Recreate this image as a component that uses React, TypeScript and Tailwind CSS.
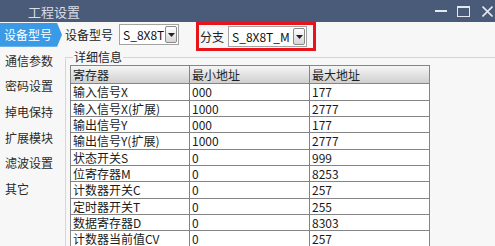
const font = { fontFamily: '"Noto Sans CJK SC", "Liberation Sans", sans-serif' };

const navItems = ["设备型号", "通信参数", "密码设置", "掉电保持", "扩展模块", "滤波设置", "其它"];

// [name, min, max, row height incl. bottom border]
const rows: [string, string, string, number][] = [
  ["输入信号X", "000", "177", 17],
  ["输入信号X(扩展)", "1000", "2777", 16],
  ["输出信号Y", "000", "177", 16],
  ["输出信号Y(扩展)", "1000", "2777", 17],
  ["状态开关S", "0", "999", 16],
  ["位寄存器M", "0", "8253", 16],
  ["计数器开关C", "0", "257", 17],
  ["定时器开关T", "0", "255", 16],
  ["数据寄存器D", "0", "8303", 16],
  ["计数器当前值CV", "0", "257", 17],
];

function Combo({ value, width }: { value: string; width: string }) {
  return (
    <div className={`${width} h-[21px] flex items-center border border-[#a3a3a3] bg-white shrink-0`}>
      <span className="flex-1 pl-[3px] text-[12px] text-[#111] leading-none">{value}</span>
      <div className="mr-[1px] w-[12px] h-[17px] rounded-[2px] border border-[#8a8a8a] bg-linear-to-b from-[#ffffff] to-[#d6d6d6] flex items-center justify-center">
        <svg width="7" height="4" viewBox="0 0 7 4">
          <path d="M0 0H7L3.5 4Z" fill="#222" />
        </svg>
      </div>
    </div>
  );
}

export default function App() {
  return (
    <div className="w-[495px] h-[246px] overflow-hidden bg-[#f7f7f7] flex flex-col" style={font}>
      {/* Title bar */}
      <div className="h-[22px] shrink-0 bg-[#4a5a79] flex items-center pl-[28px] pr-[2px]">
        <span className="text-[13px] text-[#d9dee7] leading-none">工程设置</span>
        <div className="ml-auto flex items-center">
          <div className="w-[12px] h-[2px] bg-[#e3e7ee]" />
          <svg className="ml-[10px]" width="13" height="11" viewBox="0 0 13 11">
            <rect x="0.5" y="0.5" width="12" height="10" fill="none" stroke="#e3e7ee" />
            <rect x="0" y="0" width="13" height="2" fill="#e3e7ee" />
          </svg>
          <svg className="ml-[12px]" width="11" height="11" viewBox="0 0 11 11">
            <path d="M0.5 0.5L10.5 10.5M10.5 0.5L0.5 10.5" stroke="#e3e7ee" strokeWidth="1.6" />
          </svg>
        </div>
      </div>

      <div className="flex-1 flex min-h-0">
        {/* Left nav */}
        <div className="w-[62px] shrink-0 flex flex-col">
          {navItems.map((item, i) => (
            <div key={item} className="h-[25.7px] flex items-center">
              {i === 0 ? (
                <div className="w-[62px] h-[24px] bg-[#3b9ae6] flex items-center pl-[4px] text-[12px] text-white [clip-path:polygon(0_0,57px_0,62px_50%,57px_100%,0_100%)]">
                  {item}
                </div>
              ) : (
                <span className="pl-[5px] text-[12px] text-[#2b2b2b]">{item}</span>
              )}
            </div>
          ))}
        </div>

        {/* Content */}
        <div className="flex-1 flex flex-col min-w-0">
          <div className="h-[35px] shrink-0 flex items-start">
            <div className="mt-[2px] h-[21px] flex items-center pl-[3px]">
              <span className="text-[12px] text-[#222]">设备型号</span>
              <div className="ml-[6px]">
                <Combo value="S_8X8T" width="w-[60px]" />
              </div>
            </div>
            <div className="ml-[17px] h-[29px] border-[3px] border-[#e8141c] flex items-center pl-[1px] pr-[6px]">
              <span className="text-[12px] text-[#222]">分支</span>
              <div className="ml-[4px]">
                <Combo value="S_8X8T_M" width="w-[79px]" />
              </div>
            </div>
          </div>

          {/* Group box */}
          <div className="relative flex-1 ml-[3px] border-t border-l border-[#d6d6d6] pl-[4px] pt-[7px]">
            <span className="absolute left-[7px] top-[-9px] bg-[#f7f7f7] px-[1px] text-[12px] leading-[16px] text-[#222]">
              详细信息
            </span>
            <div className="w-[360px] border-t border-[#858585]">
              <div className="flex h-[18px] bg-linear-to-b from-[#f6f6f6] to-[#cdcdcd] text-[12px] text-[#1e1e1e]">
                <div className="w-[120px] border-l border-r border-b border-[#858585] pl-[2px] leading-[17px]">寄存器</div>
                <div className="w-[120px] border-r border-b border-[#858585] pl-[2px] leading-[17px]">最小地址</div>
                <div className="w-[120px] border-r border-b border-[#858585] pl-[2px] leading-[17px]">最大地址</div>
              </div>
              {rows.map(([name, min, max, h]) => (
                <div key={name} className="flex bg-white text-[12px] text-[#1a1a1a]" style={{ height: h }}>
                  <div className="w-[120px] border-l border-r border-b border-[#858585] pl-[2px] flex items-center whitespace-nowrap">{name}</div>
                  <div className="w-[120px] border-r border-b border-[#858585] pl-[2px] flex items-center">{min}</div>
                  <div className="w-[120px] border-r border-b border-[#858585] pl-[2px] flex items-center">{max}</div>
                </div>
              ))}
            </div>
          </div>
        </div>
      </div>
    </div>
  );
}
